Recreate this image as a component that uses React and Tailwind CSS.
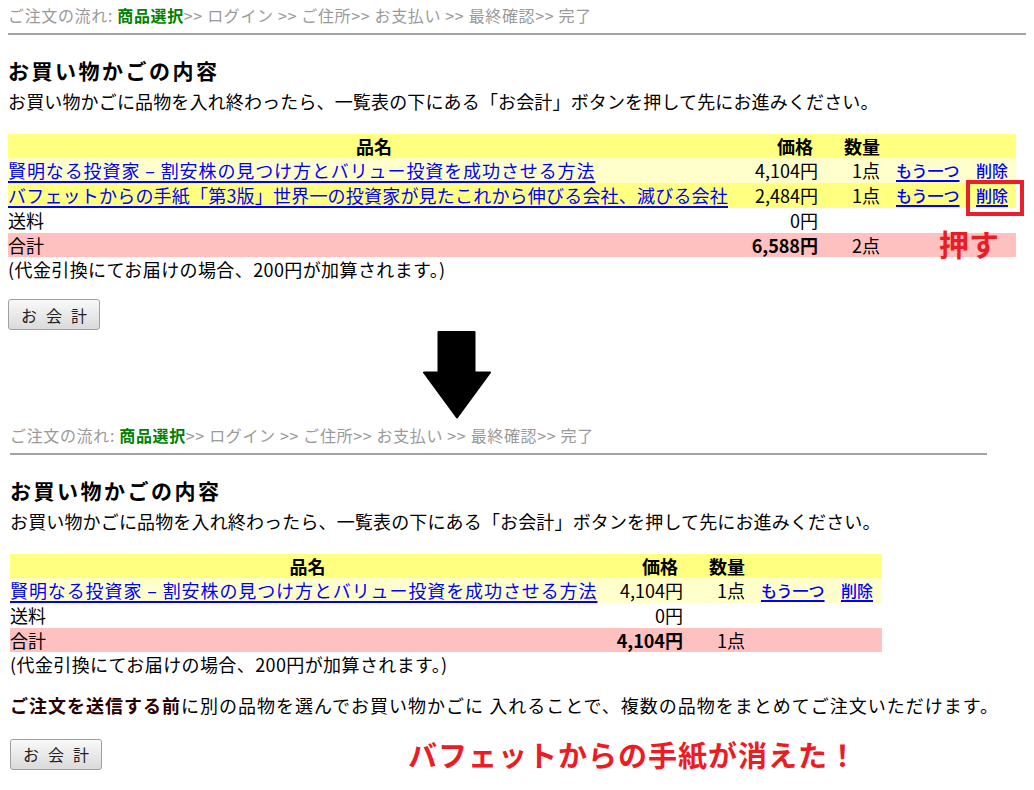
import React from "react";

const F = "font-['Noto_Sans_CJK_JP',sans-serif]";

function Breadcrumb() {
  return (
    <div className="h-[30px] leading-[30px] text-[16px] text-[#9a9a9a] whitespace-nowrap tracking-[0.65px]">
      ご注文の流れ: <span className="font-bold text-[#008000]">商品選択</span>&gt;&gt; ログイン &gt;&gt; ご住所&gt;&gt; お支払い &gt;&gt; 最終確認&gt;&gt; 完了
    </div>
  );
}

function Button() {
  return (
    <button className="w-[92px] h-[31px] border border-[#a0a0a0] rounded-[3px] bg-linear-to-b from-[#f9f9f9] to-[#dadada] flex items-center justify-center gap-[9px] text-[16px] text-[#222] leading-none">
      <span>お</span>
      <span>会</span>
      <span>計</span>
    </button>
  );
}

function Link({ children, className = "" }) {
  return (
    <a href="#" className={"text-[#0000ff] underline underline-offset-[3px] decoration-[1.5px] " + className}>
      {children}
    </a>
  );
}

function Cart({ cols, items, total, qty, lineWidth }) {
  return (
    <div>
      <Breadcrumb />
      <div className="mt-[3px] h-[2px] bg-[#a3a3a3]" style={{ width: lineWidth }} />
      <h2 className="mt-[23px] h-[24px] leading-[24px] text-[21px] font-bold tracking-[2.5px] text-black">お買い物かごの内容</h2>
      <p className="mt-[7px] leading-[24px] text-[18px] text-black whitespace-nowrap tracking-[0.15px]">
        お買い物かごに品物を入れ終わったら、一覧表の下にある「お会計」ボタンを押して先にお進みください。
      </p>
      <div className="mt-[21px] text-[18px] text-black relative">
        <div className={"grid h-[24px] leading-[24px] bg-[#ffff80] font-bold " + cols}>
          <div className="text-center">品名</div>
          <div className="text-right pr-[7px]">価格</div>
          <div className="text-right pr-[2px]">数量</div>
          <div />
          <div />
        </div>
        {items.map((it, i) => (
          <div key={i} className={"grid h-[25px] leading-[25px] whitespace-nowrap " + cols + " " + it.bg}>
            <div className="overflow-visible">
              <Link className={it.track}>{it.name}</Link>
            </div>
            <div className="text-right pr-[2px]">{it.price}</div>
            <div className="text-right pr-[2px]">1点</div>
            <div className="pl-[14px] text-[16px] font-medium">
              <Link>もう一つ</Link>
            </div>
            <div className="pl-[11px] text-[16px] font-medium">
              <Link>削除</Link>
            </div>
          </div>
        ))}
        <div className={"grid h-[25px] leading-[25px] " + cols}>
          <div>送料</div>
          <div className="text-right pr-[2px]">0円</div>
          <div />
          <div />
          <div />
        </div>
        <div className={"grid h-[24px] leading-[24px] bg-[#ffc0c0] " + cols}>
          <div>合計</div>
          <div className="text-right pr-[2px] font-bold">{total}</div>
          <div className="text-right pr-[2px]">{qty}</div>
          <div />
          <div />
        </div>
      </div>
      <p className="h-[24px] leading-[24px] text-[18px] text-black whitespace-nowrap tracking-[0.4px]">
        (代金引換にてお届けの場合、200円が加算されます。)
      </p>
    </div>
  );
}

export default function App() {
  const book1 = "賢明なる投資家 – 割安株の見つけ方とバリュー投資を成功させる方法";
  const book2 = "バフェットからの手紙「第3版」世界一の投資家が見たこれから伸びる会社、滅びる会社";
  return (
    <div className={"relative w-[1034px] h-[790px] bg-white overflow-hidden " + F}>
      {/* Before */}
      <div className="pl-[8px] relative">
        <Cart
          cols="grid-cols-[732px_80px_62px_83px_51px] w-[1008px]"
          lineWidth={1018}
          items={[
            { name: book1, price: "4,104円", bg: "bg-[#ffffcc]", track: "tracking-[0.9px]" },
            { name: book2, price: "2,484円", bg: "bg-[#ffff80]", track: "tracking-[0.2px]" },
          ]}
          total="6,588円"
          qty="2点"
        />
        <div className="mt-[18px]">
          <Button />
        </div>
        {/* annotations */}
        <div className="absolute left-[966px] top-[180px] w-[58px] h-[36px] border-[4px] border-[#e8202a]" />
        <div className="absolute left-[939px] top-[227px] text-[30px] leading-[32px] font-bold text-[#ec1c24]">押す</div>
      </div>

      {/* Arrow */}
      <div className="mt-[1px] pl-[423px] h-[88px]">
        <svg width="68" height="88" viewBox="0 0 68 88">
          <path
            d="M15.5 1 H51.5 V41.5 H67 L34 86.5 L1 41.5 H15.5 Z"
            fill="#000"
            stroke="#000"
            strokeWidth="2"
            strokeLinejoin="round"
          />
        </svg>
      </div>

      {/* After */}
      <div className="pl-[10px] mt-[1px]">
        <Cart
          cols="grid-cols-[595px_80px_62px_83px_52px] w-[872px]"
          lineWidth={977}
          items={[{ name: book1, price: "4,104円", bg: "bg-[#ffffcc]", track: "tracking-[0.9px]" }]}
          total="4,104円"
          qty="1点"
        />
        <p className="mt-[17px] h-[24px] leading-[24px] text-[18px] text-black whitespace-nowrap tracking-[1px]">
          <span className="font-semibold text-[#2a0000]">ご注文を送信する前</span>に別の品物を選んでお買い物かごに 入れることで、複数の品物をまとめてご注文いただけます。
        </p>
        <div className="mt-[21px] flex items-center">
          <Button />
          <div className="ml-[306px] text-[29px] leading-[32px] font-bold text-[#ec1c24] tracking-[1px] whitespace-nowrap">
            バフェットからの手紙が消えた！
          </div>
        </div>
      </div>
    </div>
  );
}
